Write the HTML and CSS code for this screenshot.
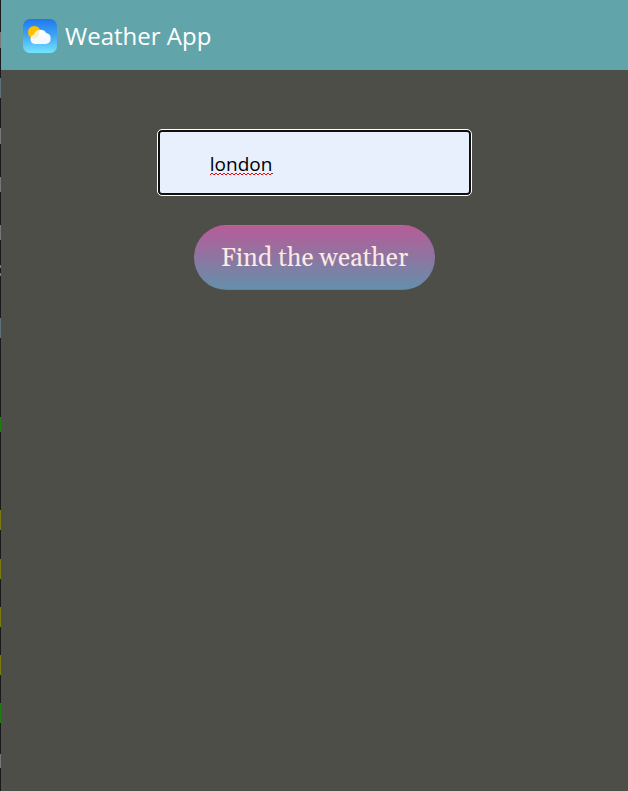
FILE: index.html
```html
<!DOCTYPE html>
<html lang="en">
<head>
<meta charset="utf-8">
<meta name="viewport" content="width=device-width, initial-scale=1">
<title>Weather App</title>
<link rel="stylesheet" href="styles.css">
</head>
<body>
<div class="edge"></div>
<div class="app">
  <header class="navbar">
    <svg class="logo" viewBox="0 0 34 34" aria-hidden="true">
      <defs>
        <linearGradient id="sky" x1="0" y1="0" x2="0" y2="1">
          <stop offset="0" stop-color="#1f78ee"/>
          <stop offset="0.5" stop-color="#41a6f4"/>
          <stop offset="1" stop-color="#76e4fd"/>
        </linearGradient>
        <linearGradient id="cloud" x1="0" y1="0" x2="0" y2="1">
          <stop offset="0" stop-color="#ffffff"/>
          <stop offset="1" stop-color="#f0f7fe"/>
        </linearGradient>
      </defs>
      <rect width="34" height="34" rx="7" fill="url(#sky)"/>
      <circle cx="11.3" cy="13.3" r="6.3" fill="#fdc006"/>
      <path d="M11.8 25A4.9 4.9 0 0 1 11.2 15.4A6.7 6.7 0 0 1 23.2 14A5.6 5.6 0 0 1 23 25Z" fill="url(#cloud)"/>
      <path d="M11.2 15.4A6.7 6.7 0 0 1 15.8 10.8A6.3 6.3 0 0 1 12.4 19.5A6.3 6.3 0 0 1 7.8 18.5A5 5 0 0 1 11.2 15.4Z" fill="#fdefc4"/>
    </svg>
    <h1 class="title">Weather App</h1>
  </header>
  <main>
    <form class="search">
      <div class="field">
        <input class="city" type="text" value="london" aria-label="City" spellcheck="false">
        <svg class="squiggle" viewBox="0 0 63 4" aria-hidden="true">
          <path d="M0 3L2 1L4 3L6 1L8 3L10 1L12 3L14 1L16 3L18 1L20 3L22 1L24 3L26 1L28 3L30 1L32 3L34 1L36 3L38 1L40 3L42 1L44 3L46 1L48 3L50 1L52 3L54 1L56 3L58 1L60 3L62 1L63 2"/>
        </svg>
      </div>
      <button class="find" type="button">Find the weather</button>
    </form>
  </main>
</div>
</body>
</html>
```
FILE: styles.css
```css
* {
  box-sizing: border-box;
}

body {
  display: flex;
  min-height: 100vh;
  margin: 0;
  background: #4d4e48;
  font-family: "Segoe UI", "Open Sans", sans-serif;
}

.edge {
  flex: 0 0 1px;
  background: linear-gradient(
    #1a1a1c 32px, #777 32px 48px,
    #1a1a1c 48px 78px, #5d7276 78px 98px,
    #1a1a1c 98px 128px, #777 128px 144px,
    #1a1a1c 144px 177px, #777 177px 192px,
    #1a1a1c 192px 225px, #777 225px 240px,
    #1a1a1c 240px 265px, #777 265px 268px,
    #1a1a1c 268px 273px, #777 273px 276px,
    #1a1a1c 276px 318px, #5d7276 318px 338px,
    #1a1a1c 338px 417px, #1f7d10 417px 432px,
    #1a1a1c 432px 510px, #7d7a0c 510px 530px,
    #1a1a1c 530px 559px, #7d7a0c 559px 579px,
    #1a1a1c 579px 607px, #7d7a0c 607px 627px,
    #1a1a1c 627px 655px, #7d7a0c 655px 675px,
    #1a1a1c 675px 703px, #1f7d10 703px 723px,
    #1a1a1c 723px 754px, #777 754px 768px,
    #1a1a1c 768px);
}

.app {
  flex: 1;
}

.navbar {
  display: flex;
  align-items: center;
  gap: 8px;
  height: 70px;
  padding: 2px 22px 0;
  background: #61a5ab;
}

.logo {
  width: 34px;
  height: 34px;
}

.title {
  margin: 0;
  color: #fff;
  font-size: 24px;
  font-weight: 400;
  line-height: 32px;
}

.search {
  display: flex;
  flex-direction: column;
  align-items: center;
  gap: 30px;
  padding-top: 60px;
}

.field {
  position: relative;
  width: 50%;
}

.city {
  display: block;
  width: 100%;
  height: 65px;
  padding: 2px 50px 0;
  border: 2px solid #101010;
  border-radius: 4px;
  outline: 1px solid #fff;
  background: #e8f0fe;
  color: #000;
  font: inherit;
  font-size: 19px;
}

.squiggle {
  position: absolute;
  left: 52px;
  top: 42px;
  width: 63px;
  height: 4px;
  fill: none;
  stroke: #f00;
}

.find {
  height: 65px;
  padding: 2px 26px 0;
  border: 1px solid transparent;
  border-radius: 33px;
  background: linear-gradient(#b65c98, #658faa);
  color: #ffe9e2;
  font-family: Georgia, Gelasio, "Liberation Serif", serif;
  font-size: 25px;
}
```
